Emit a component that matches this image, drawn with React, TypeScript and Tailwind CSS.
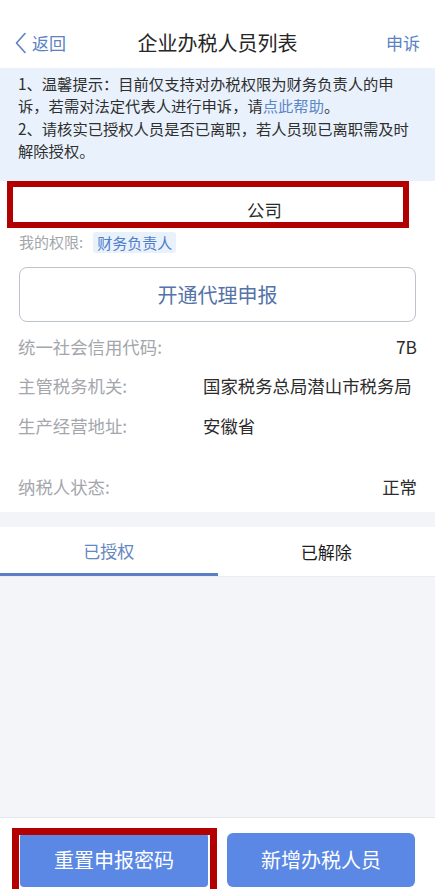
import React from "react";

const font = { fontFamily: '"Noto Sans CJK SC", "Noto Sans", sans-serif' };

function InfoRow({ label, value, right, tall }: { label: string; value: string; right?: boolean; tall?: boolean }) {
  return (
    <div className={`flex px-[18px] ${tall ? "h-[61px] items-start pt-[10px]" : "h-[39.5px] items-center"}`}>
      <div className="w-[185px] shrink-0 text-[17.4px] leading-[20px] text-[#a3a6ab]">{label}</div>
      <div className={`flex-1 text-[17.4px] leading-[20px] text-[#2c2c2c] ${right ? "text-right" : ""}`}>{value}</div>
    </div>
  );
}

export default function App() {
  return (
    <div className="flex h-[889px] w-[435px] flex-col overflow-hidden bg-white" style={font}>
      {/* Header */}
      <div className="grid h-[68px] shrink-0 grid-cols-[1fr_auto_1fr] items-center bg-white">
        <div className="flex items-center pl-[15px] pt-[17px]">
          <svg width="12" height="22" viewBox="0 0 12 22" className="mr-[5px]">
            <polyline points="10,1.5 1.5,11 10,20.5" fill="none" stroke="#5a82c5" strokeWidth="1.6" strokeLinecap="round" strokeLinejoin="round" />
          </svg>
          <span className="text-[17px] leading-[20px] text-[#5a82c5]">返回</span>
        </div>
        <div className="pt-[17px] text-[20px] leading-[24px] text-[#262626]">企业办税人员列表</div>
        <div className="pr-[15px] pt-[17px] text-right text-[17px] leading-[20px] text-[#5a82c5]">申诉</div>
      </div>

      {/* Notice */}
      <div className="shrink-0 bg-[#e9f2fc] px-[18px] pb-[20px] pt-[4px] text-[15.3px] leading-[22.3px] text-[#2f2f2f]">
        <p>
          1、温馨提示：目前仅支持对办税权限为财务负责人的申诉，若需对法定代表人进行申诉，请<span className="text-[#5b86c8]">点此帮助</span>。
        </p>
        <p>2、请核实已授权人员是否已离职，若人员现已离职需及时解除授权。</p>
      </div>

      {/* Company name */}
      <div className="ml-[7px] mr-[26px] flex h-[47px] shrink-0 items-end border-[6px] border-[#b20000] bg-white pb-[1px] pl-[234px]">
        <span className="text-[17.4px] leading-[22px] text-[#2a2a2a]">公司</span>
      </div>

      {/* Permission */}
      <div className="flex h-[27px] shrink-0 items-center px-[19px]">
        <span className="text-[15px] leading-[18px] text-[#a3a6ab]">我的权限:</span>
        <span className="ml-[10px] mt-[2px] flex h-[21px] items-center rounded-[3px] bg-[#e9f1fb] px-[4px] text-[15px] leading-[18px] text-[#4f7fcb]">财务负责人</span>
      </div>

      {/* Outline button */}
      <div className="mt-[12px] shrink-0 px-[19px]">
        <div className="flex h-[55px] items-center justify-center rounded-[8px] border border-[#bcc4cc] text-[20px] text-[#5473a8]">
          开通代理申报
        </div>
      </div>

      {/* Info */}
      <div className="mt-[5px] shrink-0 pb-[5px]">
        <InfoRow label="统一社会信用代码:" value="7B" right />
        <InfoRow label="主管税务机关:" value="国家税务总局潜山市税务局" />
        <InfoRow label="生产经营地址:" value="安徽省" tall />
        <InfoRow label="纳税人状态:" value="正常" right />
      </div>

      {/* Divider */}
      <div className="h-[15px] shrink-0 bg-[#f3f4f7]" />

      {/* Tabs */}
      <div className="flex h-[50px] shrink-0 border-b border-[#ebedf0]">
        <div className="flex flex-1 items-center justify-center border-b-[3px] border-[#5b7ec4] pt-[2px] text-[17px] text-[#6687c0]">已授权</div>
        <div className="flex flex-1 items-center justify-center pt-[2px] text-[17px] text-[#1c1c1c]">已解除</div>
      </div>

      {/* Content */}
      <div className="flex-1 bg-[#f4f5f8]" />

      {/* Bottom */}
      <div className="flex h-[72px] shrink-0 gap-[19px] border-t border-[#e6e7ea] bg-white px-[20px] pt-[15px]">
        <div className="relative flex-1">
          <div className="flex h-[54px] items-center justify-center rounded-[4px] bg-[#5a88e4] text-[20px] text-white">重置申报密码</div>
          <div className="absolute -bottom-[12px] -left-[8px] -right-[9px] -top-[5px] border-[7px] border-[#b30000]" />
        </div>
        <div className="flex h-[54px] flex-1 items-center justify-center rounded-[6px] bg-[#5a88e4] text-[20px] text-white">新增办税人员</div>
      </div>
    </div>
  );
}
